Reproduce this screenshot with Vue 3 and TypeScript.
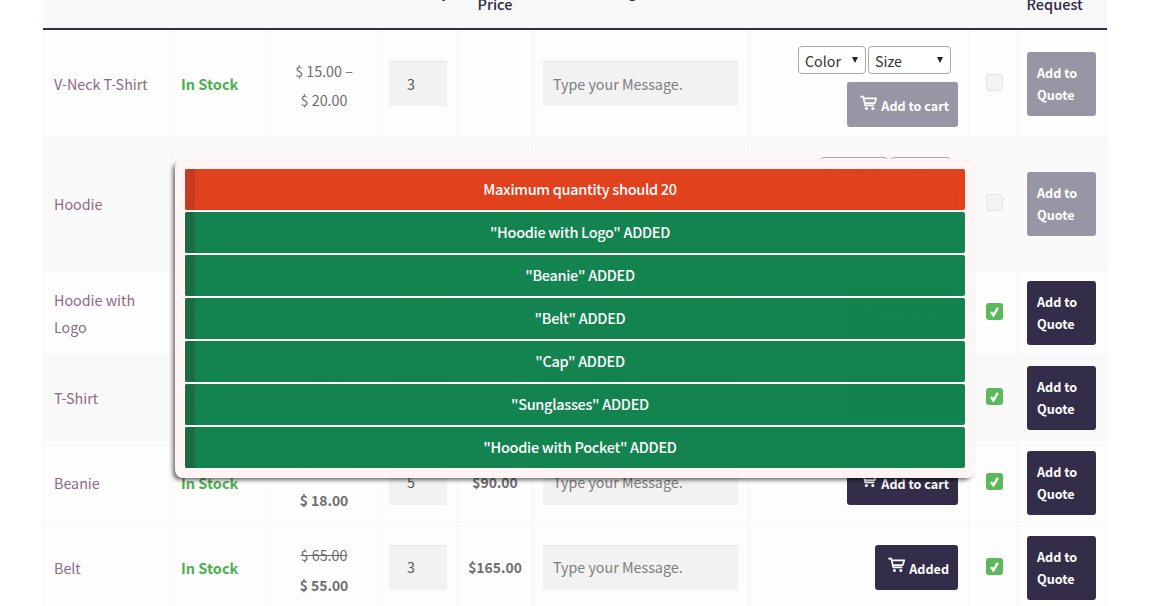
<template>
  <div class="page">
    <table class="cart-table">
      <colgroup>
        <col v-for="w in colWidths" :key="w.id" :style="{ width: w.px + 'px' }" />
      </colgroup>
      <thead>
        <tr>
          <th>Product</th>
          <th>Status</th>
          <th class="center">Price</th>
          <th>Quantity</th>
          <th class="center">Total<br />Price</th>
          <th>Order Message</th>
          <th></th>
          <th></th>
          <th class="th-quote">Quote<br />Request</th>
        </tr>
      </thead>
      <tbody>
        <tr
          v-for="row in rows"
          :key="row.name"
          :class="{ even: row.even, tight: row.tight }"
          :style="{ height: row.height + 'px' }"
        >
          <td class="name">{{ row.name }}</td>
          <td class="stock">In Stock</td>
          <td class="price" :class="row.range ? 'ranged' : 'on-sale'">
            <template v-if="row.range">
              <div>{{ row.range[0] }} –</div>
              <div>{{ row.range[1] }}</div>
            </template>
            <template v-else>
              <div class="old">{{ row.oldPrice }}</div>
              <div class="sale">{{ row.price }}</div>
            </template>
          </td>
          <td class="field"><input class="qty" :value="row.qty" readonly /></td>
          <td class="total">{{ row.total }}</td>
          <td class="field"><input class="msg" placeholder="Type your Message." readonly /></td>
          <td class="action" :class="{ variants: row.variable }">
            <div v-if="row.variable" class="selects">
              <div class="fake-select color">Color<span class="caret"></span></div>
              <div class="fake-select size" :class="{ narrow: row.even }">Size<span class="caret"></span></div>
            </div>
            <button class="btn" :class="{ off: !row.checked }">
              <svg class="cart" viewBox="0 0 18 16" width="17" height="16" fill="none" stroke="currentColor" stroke-width="1.8">
                <path d="M0.3 1.2h3.1l2.2 9.3h9.6M3.9 3.2h13.3l-1.7 5H5" />
                <circle cx="6.8" cy="13.8" r="1.6" fill="currentColor" stroke="none" />
                <circle cx="13.6" cy="13.8" r="1.6" fill="currentColor" stroke="none" />
              </svg>
              {{ row.added ? 'Added' : 'Add to cart' }}
            </button>
          </td>
          <td class="check-cell">
            <span class="check" :class="{ on: row.checked }">
              <svg v-if="row.checked" viewBox="0 0 17 17" width="17" height="17">
                <path d="M5 9l2.4 3.4L11.8 4.8" fill="none" stroke="#fff" stroke-width="2.4" />
              </svg>
            </span>
          </td>
          <td class="quote-cell">
            <button class="quote" :class="{ off: !row.checked }">Add to Quote</button>
          </td>
        </tr>
      </tbody>
    </table>

    <div class="notice-box">
      <div v-for="n in notices" :key="n.text" class="notice" :class="n.kind">{{ n.text }}</div>
    </div>
  </div>
</template>

<script setup lang="ts">
  interface Row {
    name: string
    height: number
    qty: number
    total: string
    range?: [string, string]
    oldPrice?: string
    price?: string
    variable?: boolean
    checked: boolean
    added?: boolean
    even?: boolean
    tight?: boolean
  }

  const colWidths = [127, 99, 109, 79, 75, 216, 220, 49, 89].map((px, id) => ({ id, px }))

  const rows: Row[] = [
    { name: 'V-Neck T-Shirt', height: 107, qty: 3, total: '', range: ['$ 15.00', '$ 20.00'], variable: true, checked: false },
    { name: 'Hoodie', height: 133, qty: 3, total: '', range: ['$ 42.00', '$ 45.00'], variable: true, checked: false, even: true, tight: true },
    { name: 'Hoodie with Logo', height: 85, qty: 2, total: '$90.00', oldPrice: '$ 65.00', price: '$ 45.00', checked: true },
    { name: 'T-Shirt', height: 85, qty: 4, total: '$72.00', oldPrice: '$ 20.00', price: '$ 18.00', checked: true, even: true, tight: true },
    { name: 'Beanie', height: 85, qty: 5, total: '$90.00', oldPrice: '$ 20.00', price: '$ 18.00', checked: true, tight: true },
    { name: 'Belt', height: 85, qty: 3, total: '$165.00', oldPrice: '$ 65.00', price: '$ 55.00', checked: true, added: true, tight: true },
  ]

  const notices = [
    { kind: 'error', text: 'Maximum quantity should 20' },
    { kind: 'ok', text: '"Hoodie with Logo" ADDED' },
    { kind: 'ok', text: '"Beanie" ADDED' },
    { kind: 'ok', text: '"Belt" ADDED' },
    { kind: 'ok', text: '"Cap" ADDED' },
    { kind: 'ok', text: '"Sunglasses" ADDED' },
    { kind: 'ok', text: '"Hoodie with Pocket" ADDED' },
  ]
</script>

<style>
  html,
  body {
    overflow: hidden;
    background: #fff;
  }
</style>

<style scoped>
  .page {
    position: relative;
    height: 606px;
    overflow: hidden;
    padding: 0 52px 0 43px;
    font-family: 'Noto Sans CJK SC', 'Liberation Sans', sans-serif;
    font-size: 14.3px;
    color: #6d6d6d;
  }

  /* the page is scrolled, the header row is cut at the top */
  .cart-table {
    width: 1063px;
    margin-top: -40px;
    table-layout: fixed;
    border-collapse: collapse;
  }

  th {
    height: 60px;
    padding: 0 10px 8px;
    background: #f8f8f8;
    border-bottom: 2px solid #332d4a;
    color: #2f2a45;
    font-weight: 500;
    font-size: 14.5px;
    line-height: 27px;
    text-align: left;
    vertical-align: middle;
  }

  th.center {
    text-align: center;
  }

  th.th-quote {
    padding-left: 9px;
  }

  td {
    padding: 10px;
    background: #fdfdfd;
    border: 1px solid #f6f6f6;
    line-height: 27px;
    vertical-align: middle;
  }

  tr.even td {
    background: #fafafa;
  }

  tr.tight .name,
  tr.tight .stock,
  tr.tight .field,
  tr.tight .action {
    padding-top: 9px;
    padding-bottom: 11px;
  }

  .name {
    color: #8a6a85;
  }

  .stock {
    color: #4caf50;
    font-weight: 700;
    font-size: 14.5px;
  }

  .price {
    text-align: center;
    color: #6d6d6d;
  }

  .price.ranged {
    line-height: 29px;
    padding-top: 11px;
    padding-bottom: 9px;
  }

  .price.on-sale {
    line-height: 31px;
    padding-top: 4px;
    padding-bottom: 0;
  }

  .old {
    text-decoration: line-through;
  }

  .sale,
  .total {
    font-weight: 700;
    font-size: 13.9px;
  }

  .total {
    text-align: center;
    padding: 0 0 2px;
  }

  .qty,
  .msg {
    display: block;
    box-sizing: border-box;
    width: 100%;
    height: 45px;
    margin: 0;
    border: 0;
    border-top: 1px solid #e8e8e8;
    background: #f2f2f2;
    font: inherit;
    color: #555;
    outline: none;
  }

  .qty {
    padding: 0 0 2px 18px;
  }

  .msg {
    padding: 0 10px 2px;
  }

  .msg::placeholder {
    color: #7d7d7d;
    opacity: 1;
  }

  .action {
    text-align: right;
  }

  .action.variants {
    padding-top: 16px;
  }

  tr.even .action.variants {
    vertical-align: top;
    padding-top: 19px;
  }

  .selects {
    display: flex;
    justify-content: flex-end;
    gap: 2px;
    margin: 0 7px 8px 0;
  }

  .fake-select {
    box-sizing: border-box;
    display: flex;
    align-items: center;
    justify-content: space-between;
    height: 28px;
    padding: 0 7px 0 6px;
    border: 1px solid #a9a9a9;
    border-radius: 4px;
    background: #fff;
    color: #333;
  }

  .fake-select.color {
    width: 68px;
  }

  .fake-select.size {
    width: 83px;
  }

  .fake-select.size.narrow {
    width: 61px;
  }

  .caret {
    width: 0;
    height: 0;
    border-left: 3px solid transparent;
    border-right: 3px solid transparent;
    border-top: 6px solid #222;
  }

  .btn {
    display: inline-flex;
    align-items: center;
    vertical-align: top;
    height: 45px;
    padding: 2px 9px 0 13px;
    border: 0;
    border-radius: 3px;
    background: #332d4a;
    color: #fff;
    font-family: inherit;
    font-size: 12.6px;
    font-weight: 700;
  }

  .btn.off,
  .quote.off {
    background: #9896a4;
  }

  .cart {
    margin: -6px 4px 0 0;
  }

  .check-cell {
    padding: 0 0 0 3px;
  }

  .check {
    display: block;
    width: 17px;
    height: 17px;
    margin: -3px auto 0;
    border: 1px solid #e4e4e4;
    border-radius: 3px;
    background: #f3f3f3;
    box-sizing: border-box;
  }

  .check.on {
    border: 0;
    background: #5cb85c;
  }

  .check svg {
    display: block;
  }

  .quote-cell {
    padding: 0 10px 0 9px;
  }

  .quote {
    display: block;
    width: 69px;
    height: 64px;
    padding: 0 10px;
    border: 0;
    border-radius: 3px;
    background: #332d4a;
    color: #fff;
    font-family: inherit;
    font-size: 12.6px;
    font-weight: 700;
    line-height: 22px;
    text-align: left;
  }

  .notice-box {
    position: absolute;
    left: 175px;
    top: 159px;
    box-sizing: border-box;
    width: 800px;
    padding: 10px;
    display: flex;
    flex-direction: column;
    gap: 2px;
    border-radius: 8px;
    background: #fff5f4;
    box-shadow: -3px 3px 4px -1px rgba(0, 0, 0, 0.6);
    opacity: 0.993;
  }

  .notice {
    height: 41px;
    line-height: 40px;
    padding-left: 10px;
    border-radius: 2px;
    color: #fff;
    font-size: 14.5px;
    letter-spacing: -0.3px;
    font-weight: 500;
    text-align: center;
  }

  .notice.error {
    background: #e2401c;
    box-shadow: inset 10px 0 0 #c43a1c;
  }

  .notice.ok {
    background: #12834f;
    box-shadow: inset 10px 0 0 #186b43;
  }
</style>
